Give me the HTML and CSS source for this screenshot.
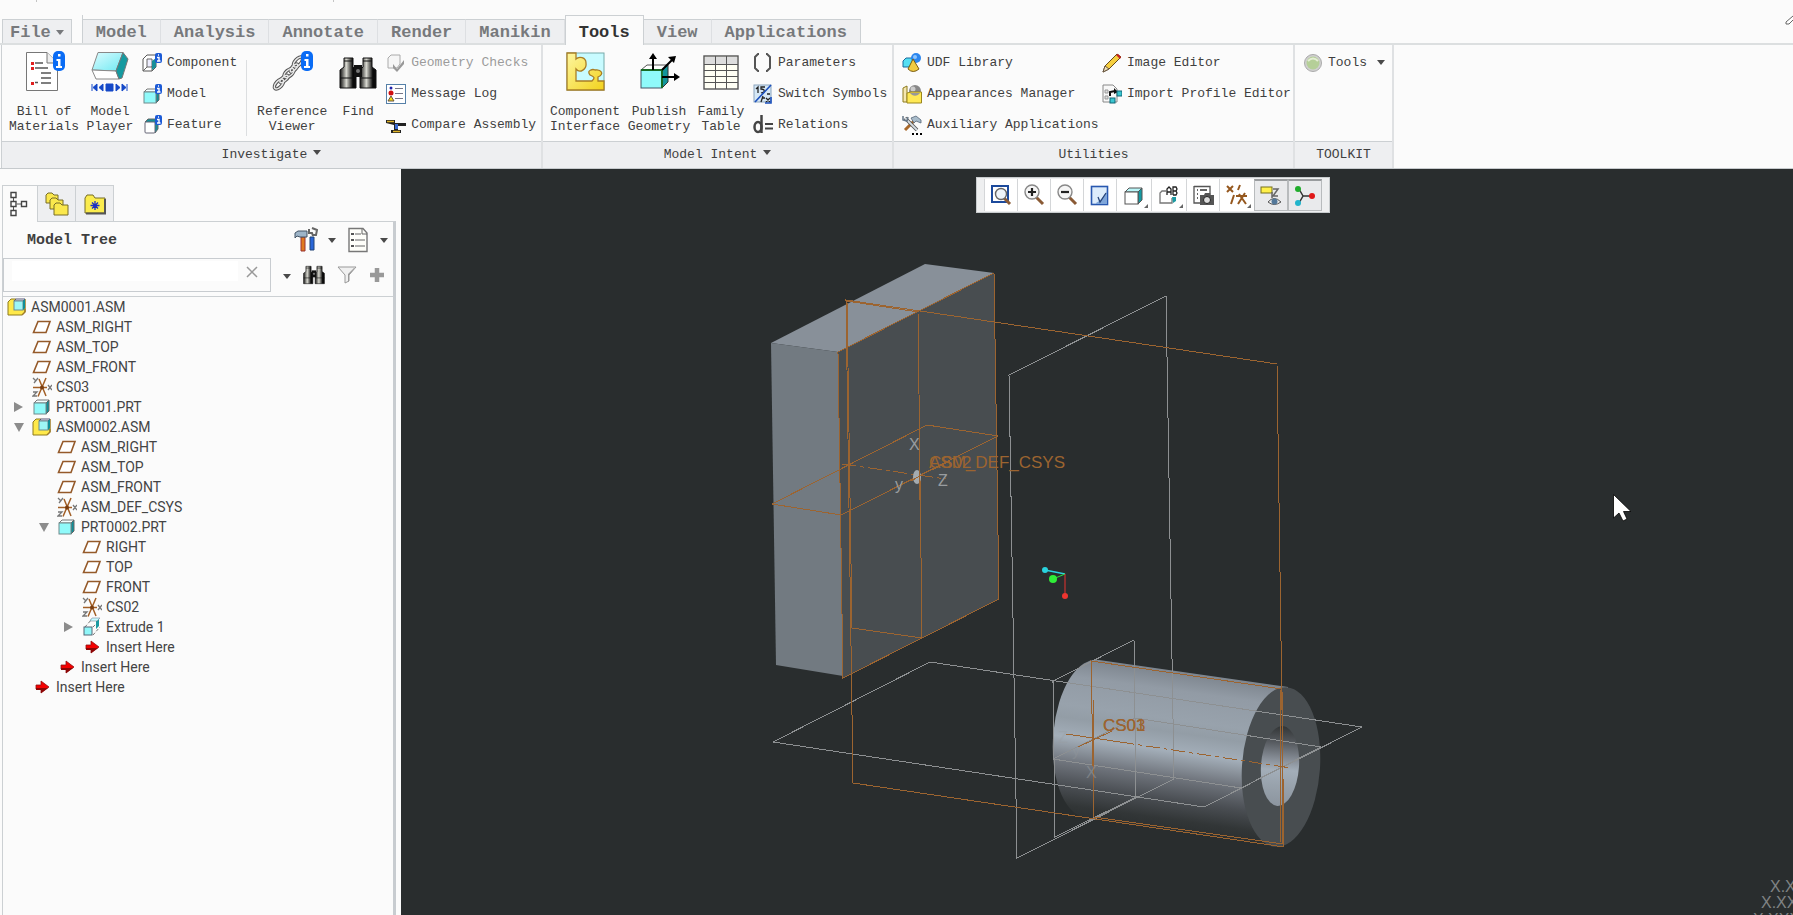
FILE: index.html
```html
<!DOCTYPE html>
<html lang="en">
<head>
    <meta charset="UTF-8">
    <meta name="viewport" content="width=device-width, initial-scale=1.0">
    <title>ASM0001</title>
    <link rel="stylesheet" href="styles.css">
</head>
<body>
    <!-- shared icons -->
    <svg class="sprite" width="0" height="0">
        <linearGradient id="gYellow" x1="0" y1="0" x2="1" y2="1">
            <stop offset="0" stop-color="#fdf6a0"/><stop offset="1" stop-color="#f3d21c"/>
        </linearGradient>
        <linearGradient id="gCyan" x1="0" y1="0" x2="1" y2="1">
            <stop offset="0" stop-color="#dcfcff"/><stop offset="1" stop-color="#6fe9f2"/>
        </linearGradient>
        <linearGradient id="gTube" x1="0" y1="0" x2="1" y2="0">
            <stop offset="0" stop-color="#111"/><stop offset=".4" stop-color="#d8d8d0"/><stop offset=".8" stop-color="#0a0a0a"/>
        </linearGradient>
        <symbol id="plane" viewBox="0 0 20 20">
            <path d="M6 4.500H18L14 15.500H1.500Z" fill="#fff" stroke="#955a2a" stroke-width="1.600"/>
        </symbol>
        <symbol id="csys" viewBox="0 0 20 20">
            <path d="M1 10.500H15M6 19.500L14 1M7 2L14 19" stroke="#a25f26" stroke-width="1.500" fill="none"/>
            <circle cx="10" cy="10.500" r="2" fill="#7a3d10"/>
            <path d="M1 1L4 4M6 1L2 6M16 8L20 13M20 8L16 13M1 15H5L1 19H5" stroke="#777" stroke-width="1.300" fill="none"/>
        </symbol>
        <symbol id="part" viewBox="0 0 20 20">
            <path d="M2 6L5 3H17L14 6Z" fill="#f4ffff" stroke="#777"/>
            <path d="M14 6L17 3V14L14 17Z" fill="#0f8f98" stroke="#666"/>
            <rect x="2" y="6" width="12" height="11" fill="#90fafa" stroke="#6f8a8c"/>
        </symbol>
        <symbol id="asm" viewBox="0 0 20 20">
            <path d="M1 5L4 2H9V12H18V15L15 18H1Z" fill="#ffe94a" stroke="#8d7a1c"/>
            <path d="M15 18L18 15V2" fill="none" stroke="#a07d2a" stroke-width="1.500"/>
            <path d="M7 4L9 2H18L16 4Z" fill="#fff" stroke="#557"/>
            <rect x="7" y="4" width="9" height="9" fill="#9df6f6" stroke="#6a8a90"/>
            <path d="M16 4L18 2V11L16 13Z" fill="#0f8f98"/>
        </symbol>
        <symbol id="insert" viewBox="0 0 20 20">
            <path d="M4 8H9V4L17 10L9 16V12H4Z" fill="#f40000" stroke="#8f1010" stroke-width=".8"/>
            <path d="M4 11H16L9 16V13H4Z" fill="#8a0606"/>
        </symbol>
        <symbol id="extrude" viewBox="0 0 20 20">
            <path d="M3 10L10 2M11 18L18 10M11 10L16 5" stroke="#777" stroke-dasharray="3 2" fill="none"/>
            <path d="M9 2H17V9L14 12V4H8Z" fill="#1a9aa2"/>
            <path d="M8 4L10 1H18L15 4Z" fill="#c9fbff" stroke="#789" stroke-width=".6"/>
            <rect x="2" y="10" width="8" height="8" fill="#8ff6f8" stroke="#567"/>
        </symbol>
        <symbol id="cubeInfo" viewBox="0 0 20 20">
            <rect x="13" y="0" width="7" height="10" rx="2" fill="#1d5bd6"/>
            <path d="M16 2H17M15 4.500H17V8M15 8H18.500" stroke="#fff" stroke-width="1.400" fill="none"/>
        </symbol>
        <symbol id="info" viewBox="0 0 12 20">
            <rect width="12" height="20" rx="5" fill="#0a6cf5"/>
            <path d="M5 3H7.500V5.500H5ZM3.500 8H7.500V15H9V17H3V15H5V10H3.500Z" fill="#fff"/>
        </symbol>
        <symbol id="binoculars" viewBox="0 0 38 32">
            <path d="M5 1H14V10L17 13V31H1V13L5 10Z" fill="url(#gTube)" stroke="#111"/>
            <path d="M24 1H33V10L37 13V31H21V13L24 10Z" fill="url(#gTube)" stroke="#111"/>
            <rect x="15" y="8" width="8" height="12" fill="#111"/>
            <circle cx="19" cy="14" r="2" fill="#777"/>
            <path d="M1 21H17M21 21H37M5 4H14M24 4H33" stroke="#111"/>
        </symbol>
    </svg>

    <div class="quick"><i></i><i></i></div>

    <nav class="tabs">
        <button class="tab file">File<span class="caret"></span></button>
        <div class="tab-set">
            <button class="tab">Model</button>
            <button class="tab">Analysis</button>
            <button class="tab">Annotate</button>
            <button class="tab">Render</button>
            <button class="tab">Manikin</button>
            <button class="tab active">Tools</button>
            <button class="tab">View</button>
            <button class="tab">Applications</button>
        </div>
        <svg class="pen" width="8" height="10" viewBox="0 0 8 10"><path d="M8 1L1 7V9H4L8 5" fill="#fff" stroke="#666"/></svg>
    </nav>

    <div class="ribbon">
        <section class="group investigate">
            <div class="tools">
                <button class="big wide">
                    <svg width="42" height="42" viewBox="0 0 42 42">
                        <path d="M3.500 2.500H24L34.500 13V40.500H3.500Z" fill="#fff" stroke="#777"/>
                        <path d="M24 2.500V13H34.500" fill="#eee" stroke="#777"/>
                        <path d="M12 13H20M12 18H25M18 23H28M18 28H28M18 33H28M12 32.500H15" stroke="#555" stroke-width="1.500"/>
                        <path d="M8 12H11V15H8ZM8 17H11V20H8ZM8 32H11V35H8Z" fill="#e02020"/>
                        <use href="#info" x="30" y="1" width="12" height="20"/>
                    </svg>
                    <span>Bill of<br>Materials</span>
                </button>
                <button class="big slim">
                    <svg width="42" height="42" viewBox="0 0 42 42">
                        <path d="M9 2.500H34L27 21L3 20Z" fill="url(#gCyan)" stroke="#888"/>
                        <path d="M3 20L27 21L30 29H7Z" fill="#fff" stroke="#888"/>
                        <path d="M34 2.500L39 9L33 28L30 29L27 21Z" fill="#159aa0" stroke="#777"/>
                        <path d="M3 34V41M8 34L4 37.500L8 41ZM14 34L10 37.500L14 41ZM17 34H24V41H17ZM27 34L31 37.500L27 41ZM33 34L37 37.500L33 41ZM38 34V41" fill="#1448c8" stroke="#1448c8"/>
                    </svg>
                    <span>Model<br>Player</span>
                </button>
                <div class="list">
                    <button class="small"><svg width="20" height="20" viewBox="0 0 20 20"><path d="M1 6L5 2H14V14L10 18H1Z" fill="#fff" stroke="#555"/><path d="M5 6H10V14H5ZM1 18L5 14M10 18V13" fill="#eef" stroke="#666"/><path d="M10 8L14 5V14L10 17Z" fill="#178e98"/><use href="#cubeInfo" width="20" height="20"/></svg>Component</button>
                    <button class="small"><svg width="20" height="20" viewBox="0 0 20 20"><use href="#part" y="2" width="20" height="20"/><use href="#cubeInfo" width="20" height="20"/></svg>Model</button>
                    <button class="small"><svg width="20" height="20" viewBox="0 0 20 20"><path d="M3 7L6 4H16V14L13 18" fill="#178e98" stroke="#666"/><rect x="3" y="7" width="10" height="11" rx="1" fill="#fff" stroke="#667"/><use href="#cubeInfo" width="20" height="20"/></svg>Feature</button>
                </div>
                <span class="sep"></span>
                <button class="big wide">
                    <svg width="42" height="42" viewBox="0 0 42 42">
                        <g fill="none" stroke="#555" stroke-width="3.500">
                            <ellipse cx="8" cy="34" rx="6" ry="3" transform="rotate(-48 8 34)"/>
                            <ellipse cx="13" cy="29" rx="5" ry="2" transform="rotate(-40 13 29)"/>
                            <ellipse cx="18" cy="23" rx="6" ry="3" transform="rotate(-40 18 23)"/>
                            <ellipse cx="23" cy="18" rx="5" ry="2" transform="rotate(-48 23 18)"/>
                            <ellipse cx="27" cy="12" rx="6" ry="3" transform="rotate(-48 27 12)"/>
                        </g>
                        <g fill="none" stroke="#e9e9e9" stroke-width="1.500">
                            <ellipse cx="8" cy="34" rx="6" ry="3" transform="rotate(-48 8 34)"/>
                            <ellipse cx="13" cy="29" rx="5" ry="2" transform="rotate(-40 13 29)"/>
                            <ellipse cx="18" cy="23" rx="6" ry="3" transform="rotate(-40 18 23)"/>
                            <ellipse cx="23" cy="18" rx="5" ry="2" transform="rotate(-48 23 18)"/>
                            <ellipse cx="27" cy="12" rx="6" ry="3" transform="rotate(-48 27 12)"/>
                        </g>
                        <use href="#info" x="30" y="1" width="12" height="20"/>
                    </svg>
                    <span>Reference<br>Viewer</span>
                </button>
                <button class="big slim">
                    <svg width="42" height="42" viewBox="0 0 42 42"><use href="#binoculars" x="2" y="7" width="38" height="32"/></svg>
                    <span>Find</span>
                </button>
                <div class="list">
                    <button class="small" disabled><svg width="20" height="20" viewBox="0 0 20 20"><path d="M2 5L5 2H14V11L11 15H2Z" fill="#f6f6f6" stroke="#aaa"/><path d="M7 11L11 16L18 7V11L11 19L7 15Z" fill="#999"/></svg>Geometry Checks</button>
                    <button class="small"><svg width="20" height="20" viewBox="0 0 20 20"><rect x=".5" y=".5" width="19" height="19" fill="#fff" stroke="#5580a8"/><path d="M9 4.500H17M9 9.500H17M9 14.500H17" stroke="#778"/><circle cx="5" cy="4" r="1.500" fill="#22a"/><circle cx="5" cy="9" r="2.500" fill="#d01010"/><path d="M5 12L8 17H2Z" fill="#f4d90c" stroke="#654"/></svg>Message Log</button>
                    <button class="small"><svg width="20" height="20" viewBox="0 0 20 20"><path d="M0 5H9V8H20V11H12V15H15V18H5V15H8V10L0 8Z" fill="#222"/><path d="M1 6.500H8M7 16.500H14" stroke="#e0b52a" stroke-width="1.500"/><path d="M9 9H12V14H9Z" fill="#3a6ad0"/></svg>Compare Assembly</button>
                </div>
            </div>
            <button class="caption">Investigate<span class="caret"></span></button>
        </section>

        <section class="group intent">
            <div class="tools">
                <button class="big wide">
                    <svg width="42" height="42" viewBox="0 0 42 42">
                        <rect x="3" y="3" width="37" height="37" fill="#c8fbff" stroke="#7aa"/>
                        <path d="M3 3H12V9C15 6 22 7 22 13C23 19 16 24 12 19V31H28C31 28 31 27 26 25C22 20 29 19 31 20C37 19 41 24 34 27V31H40V40H3Z" fill="url(#gYellow)" stroke="#a97d25" stroke-width="1.300"/>
                    </svg>
                    <span>Component<br>Interface</span>
                </button>
                <button class="big medium">
                    <svg width="42" height="42" viewBox="0 0 42 42">
                        <path d="M3 20L9 15H30L25 20Z" fill="#fff" stroke="#555"/>
                        <path d="M24 20L30 15V32L24 38Z" fill="#12969c" stroke="#333"/>
                        <rect x="3" y="20" width="21" height="18" fill="#8ffafa" stroke="#456"/>
                        <path d="M3 20H24V38" fill="none" stroke="#176b25" stroke-width="2"/>
                        <path d="M15 20V6M24 20L35 9M24 27H38" stroke="#000" stroke-width="2"/>
                        <path d="M15 3L19 9H11ZM38 6L36 13L30 7ZM42 27L36 31V23Z" fill="#000"/>
                    </svg>
                    <span>Publish<br>Geometry</span>
                </button>
                <button class="big slim">
                    <svg width="42" height="42" viewBox="0 0 42 42">
                        <rect x="4" y="6" width="34" height="33" fill="#fffff4" stroke="#555" stroke-width="1.400"/>
                        <rect x="5" y="7" width="32" height="7" fill="#ddd"/>
                        <path d="M4 14.500H38M4 20.500H38M4 26.500H38M4 32.500H38M15.500 6V39M26.500 6V39" stroke="#555"/>
                    </svg>
                    <span>Family<br>Table</span>
                </button>
                <div class="list">
                    <button class="small"><svg width="20" height="20" viewBox="0 0 20 20"><path d="M6 1H5L2 4V15L5 18H6M13 1H14L17 4V15L14 18H13" fill="none" stroke="#555" stroke-width="2"/></svg>Parameters</button>
                    <button class="small"><svg width="20" height="20" viewBox="0 0 20 20"><rect x="1" y="1" width="17" height="17" fill="#d6e8f6" stroke="#8aa4bd"/><path d="M3 5L5 3V9M12 3H8V5Q12 5 11 8L8 9M10 12L8 18M9 14H12M13 14L17 18M17 14L13 18M14 10H17" fill="none" stroke="#222" stroke-width="1.300"/><path d="M2 18L18 1M18 13V19H12" fill="none" stroke="#1c50bd" stroke-width="1.600"/></svg>Switch Symbols</button>
                    <button class="small"><svg width="20" height="20" viewBox="0 0 20 20"><path d="M8.500 0V18" stroke="#444" stroke-width="2.500"/><ellipse cx="5" cy="12" rx="3.500" ry="5" fill="none" stroke="#444" stroke-width="2.500"/><path d="M12 9H20M12 13.500H20" stroke="#444" stroke-width="2"/></svg>Relations</button>
                </div>
            </div>
            <button class="caption">Model Intent<span class="caret"></span></button>
        </section>

        <section class="group utilities">
            <div class="tools">
                <div class="list">
                    <button class="small"><svg width="20" height="20" viewBox="0 0 20 20"><path d="M1 8L4 5H11V12L8 14H1Z" fill="#55dff2" stroke="#1a6a9c"/><circle cx="14" cy="5" r="5" fill="#2c86ee"/><circle cx="13" cy="4" r="2" fill="#8cc6ff"/><path d="M11 6L17 16Q11 21 6 16Z" fill="#f0cb42" stroke="#7a5c12"/></svg>UDF Library</button>
                    <button class="small"><svg width="20" height="20" viewBox="0 0 20 20"><path d="M1 4L5 2V18H1Z" fill="#f5e7b0" stroke="#8d7a1c"/><circle cx="13" cy="7" r="6" fill="#888"/><circle cx="11" cy="5" r="2.500" fill="#ccc"/><path d="M5 9L9 8H19.500V19H5Z" fill="#ffe955" stroke="#9a861f"/><path d="M8 9A6 6 0 0 0 18 9Z" fill="#999"/></svg>Appearances Manager</button>
                    <button class="small"><svg width="20" height="20" viewBox="0 0 20 20"><path d="M3 15L12 6" stroke="#a8682a" stroke-width="3"/><path d="M9 3L14 1L19 5V8L14 6L12 8Z" fill="#a8bccb" stroke="#567" stroke-width=".8"/><path d="M3 3L15 15" stroke="#555" stroke-width="3.500"/><path d="M3 3L15 15" stroke="#d5dde3" stroke-width="1.800"/><path d="M1 1V5L5 6L6 2" fill="none" stroke="#678" stroke-width="1.500"/><path d="M10 18H12V20H10ZM14 18H16V20H14ZM18 18H20V20H18Z" fill="#000"/></svg>Auxiliary Applications</button>
                </div>
                <div class="list">
                    <button class="small"><svg width="20" height="20" viewBox="0 0 20 20"><path d="M1 19L3 13L15 1L19 4L7 16Z" fill="#f6cf3f" stroke="#654a1a"/><path d="M14 2L16 1L19 4L18 6Z" fill="#c42020"/><path d="M1 19L3 13L7 16Z" fill="#eee1bb" stroke="#654"/></svg>Image Editor</button>
                    <button class="small"><svg width="20" height="20" viewBox="0 0 20 20"><path d="M1 1H11L15 5V18H1Z" fill="#f8f8f8" stroke="#888"/><path d="M3 6H6V9H3ZM3 12H6V15H3Z" fill="#ddd" stroke="#999"/><path d="M8 12V8L13 7" fill="none" stroke="#111" stroke-width="2"/><path d="M12 4L16 8L12 10Z" fill="#111"/><rect x="15" y="7" width="5" height="5" fill="#3ac6d0" stroke="#167"/><rect x="8" y="14" width="5" height="5" fill="#3ac6d0" stroke="#167"/></svg>Import Profile Editor</button>
                </div>
            </div>
            <div class="caption">Utilities</div>
        </section>

        <section class="group toolkit">
            <div class="tools">
                <div class="list">
                    <button class="small"><svg width="20" height="20" viewBox="0 0 20 20"><circle cx="10" cy="10" r="8.500" fill="#d0d0d0" stroke="#aaa"/><circle cx="10" cy="10" r="6.500" fill="#b5cf98"/><path d="M5 8Q10 3 15 8" fill="none" stroke="#e4eed4" stroke-width="2"/></svg>Tools<span class="caret"></span></button>
                </div>
            </div>
            <div class="caption">TOOLKIT</div>
        </section>
    </div>

    <main>
        <aside class="side">
            <div class="side-tabs">
                <button class="side-tab active" aria-label="Tree"><svg width="20" height="26" viewBox="0 0 20 26"><path d="M3.500 7V10M3.500 16V19M7 13H12" stroke="#555"/><path d="M1 1.500H6V6.500H1ZM1 10.500H6V15.500H1ZM1 19.500H6V24.500H1ZM11.500 10.500H16.500V15.500H11.500Z" fill="#fff" stroke="#444" stroke-width="1.400"/></svg></button>
                <button class="side-tab" aria-label="Folders"><svg width="24" height="24" viewBox="0 0 24 24"><g fill="#fbe84c" stroke="#766c28"><path d="M1 3L3 1H7L9 3H13V11H1Z"/><path d="M5 8L7 6H11L13 8H18V17H5Z"/><path d="M9 13L11 11H15L17 13H23V23H9Z"/></g></svg></button>
                <button class="side-tab" aria-label="Favorites"><svg width="24" height="24" viewBox="0 0 24 24"><path d="M2 6L4 3H10L12 6H22V21H2Z" fill="#fbec4e" stroke="#766c28"/><path d="M22 7V21.500H3" fill="none" stroke="#555" stroke-width="2"/><path d="M12 9V18M7.500 13.500H16.500M9 10.500L15 16.500M15 10.500L9 16.500" stroke="#1c2fc4" stroke-width="1.300"/></svg></button>
            </div>
            <div class="panel">
                <header class="panel-head">
                    <h2>Model Tree</h2>
                    <button aria-label="Settings"><svg width="24" height="26" viewBox="0 0 24 26"><path d="M7 10H11V24H7Z" fill="#e07a1e" stroke="#933"/><path d="M1 6L4 4H13V10H6L3 9L1 11Z" fill="#9db4c8" stroke="#456"/><path d="M16 10H20V23H16Z" fill="#2a66d8" stroke="#247"/><path d="M15 2V6H18L19 9M18 1L23 3L22 8H18" fill="none" stroke="#666" stroke-width="2"/></svg><span class="caret"></span></button>
                    <button aria-label="Show"><svg width="24" height="26" viewBox="0 0 24 26"><path d="M3 1.500H17L21 6V24.500H3Z" fill="#fffffa" stroke="#777" stroke-width="1.400"/><path d="M16 2V7H21M9 7H15M9 13H19M9 19H19" fill="none" stroke="#666"/><path d="M5 6H8V8H5ZM5 12H8V14H5ZM5 18H8V20H5Z" fill="#555"/></svg><span class="caret"></span></button>
                </header>
                <div class="search">
                    <div class="search-box">
                        <input type="text" aria-label="Search">
                        <button aria-label="Clear"><svg width="12" height="12" viewBox="0 0 12 12"><path d="M1 1L11 11M11 1L1 11" stroke="#999" stroke-width="1.500"/></svg></button>
                    </div>
                    <button aria-label="Options"><span class="caret"></span></button>
                    <button aria-label="Find"><svg width="22" height="20"><use href="#binoculars" width="22" height="20"/></svg></button>
                    <button aria-label="Filter"><svg width="20" height="20" viewBox="0 0 20 20"><path d="M1 2H19L12 10V16L8 18V10Z" fill="#f0f0f0" stroke="#999"/><path d="M11 9L17 3V4L12 10V16L11 17Z" fill="#999"/></svg></button>
                    <button aria-label="Add"><svg width="16" height="16" viewBox="0 0 16 16"><path d="M8 1V15M1 8H15" stroke="#999" stroke-width="4.500"/></svg></button>
                </div>
                <div class="tree">
                    <div class="row root"><svg class="ico"><use href="#asm"/></svg>ASM0001.ASM</div>
                    <ul>
                        <li><div class="row"><i></i><svg class="ico"><use href="#plane"/></svg>ASM_RIGHT</div></li>
                        <li><div class="row"><i></i><svg class="ico"><use href="#plane"/></svg>ASM_TOP</div></li>
                        <li><div class="row"><i></i><svg class="ico"><use href="#plane"/></svg>ASM_FRONT</div></li>
                        <li><div class="row"><i></i><svg class="ico"><use href="#csys"/></svg>CS03</div></li>
                        <li><div class="row"><button class="closed" aria-label="Expand"></button><svg class="ico"><use href="#part"/></svg>PRT0001.PRT</div></li>
                        <li>
                            <div class="row"><button class="open" aria-label="Collapse"></button><svg class="ico"><use href="#asm"/></svg>ASM0002.ASM</div>
                            <ul>
                                <li><div class="row"><i></i><svg class="ico"><use href="#plane"/></svg>ASM_RIGHT</div></li>
                                <li><div class="row"><i></i><svg class="ico"><use href="#plane"/></svg>ASM_TOP</div></li>
                                <li><div class="row"><i></i><svg class="ico"><use href="#plane"/></svg>ASM_FRONT</div></li>
                                <li><div class="row"><i></i><svg class="ico"><use href="#csys"/></svg>ASM_DEF_CSYS</div></li>
                                <li>
                                    <div class="row"><button class="open" aria-label="Collapse"></button><svg class="ico"><use href="#part"/></svg>PRT0002.PRT</div>
                                    <ul>
                                        <li><div class="row"><i></i><svg class="ico"><use href="#plane"/></svg>RIGHT</div></li>
                                        <li><div class="row"><i></i><svg class="ico"><use href="#plane"/></svg>TOP</div></li>
                                        <li><div class="row"><i></i><svg class="ico"><use href="#plane"/></svg>FRONT</div></li>
                                        <li><div class="row"><i></i><svg class="ico"><use href="#csys"/></svg>CS02</div></li>
                                        <li><div class="row"><button class="closed" aria-label="Expand"></button><svg class="ico"><use href="#extrude"/></svg>Extrude 1</div></li>
                                        <li><div class="row"><i></i><svg class="ico"><use href="#insert"/></svg>Insert Here</div></li>
                                    </ul>
                                </li>
                                <li><div class="row"><i></i><svg class="ico"><use href="#insert"/></svg>Insert Here</div></li>
                            </ul>
                        </li>
                        <li><div class="row"><i></i><svg class="ico"><use href="#insert"/></svg>Insert Here</div></li>
                    </ul>
                </div>
            </div>
        </aside>

        <div class="viewport">
            <svg class="scene" viewBox="401 169 1392 746" preserveAspectRatio="xMinYMin meet">
                <defs>
                    <linearGradient id="gCyl" gradientUnits="userSpaceOnUse" x1="1190" y1="673" x2="1168" y2="832">
                        <stop offset="0" stop-color="#7d858e"/>
                        <stop offset=".12" stop-color="#929ba5"/>
                        <stop offset=".3" stop-color="#98a2ac"/>
                        <stop offset=".38" stop-color="#939da6"/>
                        <stop offset=".5" stop-color="#a3aeb9"/>
                        <stop offset=".57" stop-color="#8d959e"/>
                        <stop offset=".66" stop-color="#6f747c"/>
                        <stop offset=".8" stop-color="#4a4e53"/>
                        <stop offset=".92" stop-color="#323637"/>
                        <stop offset="1" stop-color="#2b2f30"/>
                    </linearGradient>
                    <linearGradient id="gHole" x1="0" y1="0" x2="0" y2="1">
                        <stop offset="0" stop-color="#323536"/>
                        <stop offset=".2" stop-color="#55595e"/>
                        <stop offset=".42" stop-color="#888f98"/>
                        <stop offset=".55" stop-color="#a3aeb9"/>
                        <stop offset=".75" stop-color="#98a2ac"/>
                        <stop offset="1" stop-color="#8c959f"/>
                    </linearGradient>
                </defs>

                <!-- block -->
                <path d="M771 343L925 264L994 273L838 352Z" fill="#889099"/>
                <path d="M771 343L838 352L843 676L776 665Z" fill="#727a81"/>
                <path d="M838 352L994 273L999 599L843 678Z" fill="#484d50"/>

                <!-- cylinder -->
                <path d="M1099 660L1288 687L1276 846L1084 817A38 78 4 0 1 1099 660Z" fill="url(#gCyl)"/>
                <ellipse cx="1281" cy="767" rx="39" ry="80" transform="rotate(4 1281 767)" fill="#484d50"/>
                <ellipse cx="1280" cy="766" rx="19" ry="40" transform="rotate(4 1280 766)" fill="url(#gHole)"/>

                <g class="grey-lines">
                    <path d="M1009 375L1166 296L1174 779L1017 858Z"/>
                    <path d="M773 742L930 662L1362 727L1204 807Z"/>
                    <path d="M1053 681L1134 640L1136 797L1055 837Z"/>
                    <path d="M1053 759L1135 718L1321 747L1241 788Z"/>
                </g>

                <g class="orange-lines">
                    <path d="M838 352L994 273L999 599L843 678Z"/>
                    <path d="M846 300L1277 364L1284 847L853 783Z"/>
                    <path d="M847 301L918 312L922 638L852 628Z"/>
                    <path d="M772 504L927 425L998 436L841 515Z"/>
                    <path d="M842 464L946 479" stroke-dasharray="14 4 4 4"/>
                    <path d="M890 490L950 461M919 450V500"/>
                    <path d="M1091 661L1282 689L1283 844L1094 817Z"/>
                    <path d="M1280 690V842M1093 700V770M1078 747L1112 731"/>
                    <path d="M1066 734L1120 742"/>
                    <path d="M1120 742L1291 768" stroke-dasharray="14 4 4 4"/>
                </g>
                <ellipse cx="917" cy="477" rx="4" ry="7" fill="#a4abb0"/>
                <path d="M911 481L925 473M919 468V486" class="orange-lines"/>

                <g class="axis-text">
                    <text x="909" y="450">X</text>
                    <text x="895" y="490">y</text>
                    <text x="938" y="486">Z</text>
                    <text x="1086" y="778" opacity=".5">X</text>
                    <text x="1072" y="756" opacity=".3">y</text>
                    <text x="1058" y="743" opacity=".3">Z</text>
                </g>
                <g class="datum-text">
                    <text x="929" y="468">CS02</text>
                    <text x="929" y="468">ASM_DEF_CSYS</text>
                    <text x="1103" y="731">CS01</text>
                    <text x="1103" y="731">CS03</text>
                </g>

                <!-- spin centre -->
                <path d="M1065 574L1045 570" stroke="#29d3de" stroke-width="1.500"/>
                <circle cx="1045" cy="570" r="3" fill="#29d3de"/>
                <path d="M1065 574L1053 579" stroke="#2ae33a"/>
                <circle cx="1053" cy="579" r="4" fill="#2fee38"/>
                <path d="M1065 574V596" stroke="#e8322e"/>
                <circle cx="1065" cy="596" r="3" fill="#ee3530"/>

                <!-- tolerance readout -->
                <g class="tolerance">
                    <text x="1770" y="892">X.X</text>
                    <text x="1761" y="908">X.XX</text>
                    <text x="1753" y="925">X.XXX</text>
                </g>

                <path d="M1613.500 494.500V518L1619 513L1623 521L1627 519L1623.500 511.500H1631Z" fill="#fff" stroke="#000" stroke-width=".8"/>
            </svg>

            <div class="view-bar">
                <button aria-label="Refit"><svg width="22" height="22" viewBox="0 0 22 22"><rect x="2" y="2" width="16" height="16" fill="#fff" stroke="#1c4a9c" stroke-width="2"/><path d="M14 14L20 20" stroke="#8a5a35" stroke-width="3"/><circle cx="11" cy="10" r="5.500" fill="#eef4fa" stroke="#666" stroke-width="1.400"/></svg></button>
                <button aria-label="Zoom in"><svg width="22" height="22" viewBox="0 0 22 22"><path d="M13 13L20 20" stroke="#8a5a35" stroke-width="3"/><circle cx="9" cy="8" r="7" fill="#f5f5f5" stroke="#888" stroke-width="1.400"/><path d="M9 4V12M5 8H13" stroke="#222" stroke-width="2.200"/></svg></button>
                <button aria-label="Zoom out"><svg width="22" height="22" viewBox="0 0 22 22"><path d="M13 13L20 20" stroke="#8a5a35" stroke-width="3"/><circle cx="9" cy="8" r="7" fill="#f5f5f5" stroke="#888" stroke-width="1.400"/><path d="M5 8H13" stroke="#222" stroke-width="2.200"/></svg></button>
                <button aria-label="Repaint"><svg width="22" height="22" viewBox="0 0 22 22"><rect x="2.500" y="2.500" width="16" height="18" fill="#dcecfb" stroke="#2858b0" stroke-width="1.600"/><path d="M7 19Q13 16 18 7V20H7Z" fill="#7fa6da"/><path d="M9 13L11 18L17 9" fill="none" stroke="#26457a" stroke-width="1.300"/></svg></button>
                <button class="more" aria-label="Display style"><svg width="22" height="22" viewBox="0 0 22 22"><path d="M2 8L6 4H19L15 8Z" fill="#b9f6f8" stroke="#555"/><path d="M15 8L19 4V16L15 20Z" fill="#149aa2" stroke="#555"/><rect x="2" y="8" width="13" height="12" fill="#fff" stroke="#555"/></svg></button>
                <button class="more" aria-label="Saved views"><svg width="22" height="22" viewBox="0 0 22 22"><path d="M8 7H4L2 9V19H14V14" fill="none" stroke="#777" stroke-width="1.300"/><path d="M14 13H18V17L15 19Z" fill="#1a9aa2"/><path d="M9 11V5L11 3L13 5V11M9 8H13M15 11V3H18L19 5L18 7H15M18 7L19 9L18 11H15" fill="none" stroke="#222" stroke-width="1.300"/></svg></button>
                <button aria-label="View manager"><svg width="22" height="22" viewBox="0 0 22 22"><path d="M2 2.500H18V10M2 2V19H8" fill="none" stroke="#555" stroke-width="1.300"/><path d="M5 6H6M5 10H6M5 14H6M8 6H15" stroke="#333" stroke-width="1.500"/><path d="M8 11H12L13 9H18L19 11H22V21H8Z" fill="#555"/><circle cx="15" cy="16" r="3.500" fill="#ddd" stroke="#222"/></svg></button>
                <button class="more" aria-label="Datum display"><svg width="22" height="22" viewBox="0 0 22 22"><path d="M1 2L7 8M7 2L1 8M14 1L12 6M8 11L5 20M10 12H21M12 20L19 9M13 10L20 20" stroke="#95581f" stroke-width="2" fill="none"/></svg></button>
                <button class="on" aria-label="Annotation display"><svg width="22" height="22" viewBox="0 0 22 22"><rect x="1" y="2" width="11" height="6" fill="#fff04a" stroke="#77701c"/><path d="M12 7V13M13 4H18L13 11H18" fill="none" stroke="#666" stroke-width="1.500"/><path d="M8 17Q14 10 21 17Q14 22 8 17Z" fill="#eee" stroke="#555"/><circle cx="14.500" cy="16.500" r="3" fill="#53789a"/></svg></button>
                <button class="on" aria-label="Spin center"><svg width="22" height="22" viewBox="0 0 22 22"><path d="M5 4L9 11L5 18M9 11H18" fill="none" stroke="#333" stroke-width="1.500"/><circle cx="4" cy="4" r="3" fill="#20ad2c"/><circle cx="4" cy="18" r="3" fill="#22b5cc"/><circle cx="18" cy="11" r="3" fill="#e01818"/></svg></button>
            </div>
        </div>
    </main>
</body>
</html>
```
FILE: styles.css
```css
* {
    box-sizing: border-box;
}
body {
    display: flex;
    flex-direction: column;
    height: 100vh;
    margin: 0;
    overflow: hidden;
    background-color: #fbfbfb;
    color: #3f3f3f;
    font-family: "Liberation Mono", monospace;
    font-size: 13px;
}
button {
    padding: 0;
    border: none;
    background: none;
    color: inherit;
    font: inherit;
    cursor: pointer;
}
svg {
    display: block;
    flex: none;
}
.sprite {
    position: absolute;
}
.caret {
    display: inline-block;
    border: 4px solid transparent;
    border-top: 5px solid #4a4a4a;
    border-bottom: none;
}

/* top strip and tabs */
.quick {
    display: flex;
    gap: 296px;
    height: 15px;
    padding-left: 36px;
}
.quick i {
    width: 1px;
    height: 2px;
    background-color: #c4c4c4;
}
.tabs {
    display: flex;
    align-items: flex-end;
    height: 30px;
    padding-left: 2px;
    border-bottom: 2px solid #dcdfe0;
}
.tab-set {
    display: flex;
    align-items: flex-end;
    margin-left: 10px;
    border-left: 1px solid #ccd0d3;
}
.tab {
    height: 24px;
    padding: 2px 13px 0;
    border-top: 1px solid #ccd0d3;
    border-right: 1px solid #dddfe2;
    background-color: #eeeff1;
    color: #77797c;
    font-size: 17px;
    font-weight: bold;
}
.tab:last-child {
    border-right-color: #ccd0d3;
}
.tab.file {
    padding: 2px 7px 0;
    border: 1px solid #ccd0d3;
    border-bottom: none;
}
.tab.file .caret {
    margin-left: 5px;
    border-top-color: #77797c;
    vertical-align: middle;
}
.tab.active {
    height: 30px;
    margin-bottom: -2px;
    padding-top: 4px;
    border: 1px solid #ccd0d3;
    border-bottom: none;
    background-color: #fbfbfb;
    color: #333;
}
.pen {
    margin: 0 0 18px auto;
}

/* ribbon */
.ribbon {
    display: flex;
    height: 124px;
    padding-left: 1px;
    border-bottom: 1px solid #c6cacd;
}
.group {
    display: flex;
    flex-direction: column;
    flex: none;
    border-right: 2px solid #dfe1e3;
}
.investigate {
    width: 542px;
    border-left: 1px solid #ccd0d3;
}
.intent {
    width: 351px;
}
.utilities {
    width: 401px;
}
.toolkit {
    width: 99px;
}
.tools {
    display: flex;
    flex: 1;
    padding: 5px 0 0 3px;
}
.caption {
    height: 27px;
    border-top: 1px solid #ccd0d3;
    background-color: #eeeff1;
    line-height: 26px;
    text-align: center;
}
.caption .caret {
    margin-left: 6px;
    vertical-align: 3px;
}
.big {
    display: flex;
    flex-direction: column;
    align-items: center;
    gap: 12px;
    height: 84px;
    line-height: 15px;
}
.wide {
    width: 78px;
}
.medium {
    width: 70px;
}
.slim {
    width: 54px;
}
.list {
    display: flex;
    flex-direction: column;
    gap: 10px;
    padding: 2px 0 0 5px;
}
.investigate .list:last-child {
    padding-left: 1px;
}
.small {
    display: flex;
    align-items: center;
    gap: 5px;
    height: 21px;
    white-space: nowrap;
}
.small:disabled {
    color: #9b9b9b;
}
.small .caret {
    margin-left: 5px;
}
.sep {
    width: 1px;
    height: 76px;
    margin: 10px 6px 0 9px;
    background-color: #dcdee0;
}
.utilities .list {
    width: 200px;
}

/* model tree */
main {
    display: flex;
    flex: 1;
    min-height: 0;
}
.side {
    display: flex;
    flex-direction: column;
    flex: none;
    width: 401px;
    padding: 16px 5px 0 2px;
}
.side-tabs {
    display: flex;
}
.side-tab {
    display: flex;
    align-items: center;
    justify-content: center;
    width: 38px;
    height: 37px;
    margin-bottom: -1px;
    border: 1px solid #ccd0d3;
    border-left: none;
    background-color: #eeeff1;
}
.side-tab.active {
    z-index: 1;
    width: 36px;
    border-left: 1px solid #ccd0d3;
    border-bottom: none;
    background-color: #fbfbfb;
}
.panel {
    flex: 1;
    border: 1px solid #ccd0d3;
    border-right: 3px solid #c8ccd0;
    border-bottom: none;
}
.panel-head {
    display: flex;
    align-items: center;
    gap: 10px;
    height: 36px;
    padding: 0 5px 0 24px;
}
.panel-head h2 {
    margin: 0 auto 0 0;
    font-size: 15px;
}
.panel-head button {
    display: flex;
    align-items: center;
    gap: 10px;
}
.search {
    display: flex;
    align-items: center;
    gap: 12px;
    height: 39px;
    padding: 0 8px 4px 0;
    border-bottom: 1px solid #ccd0d3;
}
.search-box {
    display: flex;
    align-items: flex-start;
    flex: 1;
    height: 34px;
    padding: 2px 12px 2px 8px;
    border: 1px solid #c8ccd0;
}
.search-box input {
    flex: 1;
    min-width: 0;
    height: 20px;
    border: none;
    background-color: #fff;
    font: inherit;
}
.search-box button {
    margin: 5px 0 0 8px;
}
.tree {
    color: #444;
    font-family: Roboto, sans-serif;
    font-size: 14px;
}
.tree ul {
    margin: 0;
    padding-left: 25px;
    list-style: none;
}
.tree > ul {
    padding-left: 11px;
}
.row {
    display: flex;
    align-items: center;
    height: 20px;
}
.root {
    padding-left: 4px;
}
.row i,
.row button {
    width: 18px;
}
.row button::before {
    content: "";
    display: block;
    width: 0;
    border: 5px solid transparent;
}
.row .closed::before {
    border-left: 9px solid #8c8c8c;
    border-right: none;
}
.row .open::before {
    border-top: 9px solid #8c8c8c;
    border-bottom: none;
}
.ico {
    width: 20px;
    height: 20px;
    margin-right: 4px;
}

/* graphics area */
.viewport {
    position: relative;
    flex: 1;
    overflow: hidden;
    background-color: #292d2e;
}
.scene {
    width: 100%;
    font-family: "Liberation Sans", sans-serif;
}
.grey-lines,
.orange-lines {
    fill: none;
    stroke: #8d9092;
    shape-rendering: crispEdges;
}
.orange-lines {
    stroke: #9c6430;
}
.axis-text,
.tolerance {
    fill: #989c9f;
    font-size: 16px;
}
.tolerance {
    fill: #808384;
}
.datum-text {
    fill: #9c6430;
    font-size: 17px;
}
.view-bar {
    position: absolute;
    top: 8px;
    left: 575px;
    display: flex;
    padding: 1px 7px;
    background-color: #eeeff0;
    border: 1px solid #c8ccce;
}
.view-bar button {
    position: relative;
    display: flex;
    align-items: center;
    justify-content: center;
    width: 33px;
    height: 32px;
    border-left: 1px solid #d4d6d8;
    background-color: #fff;
}
.view-bar .more {
    width: 35px;
}
.view-bar .more::after {
    content: "";
    position: absolute;
    right: 3px;
    bottom: 3px;
    border: 2px solid #666;
    border-top-color: transparent;
    border-left-color: transparent;
}
.view-bar .on {
    width: 34px;
    border: 1px solid #b8bbbd;
    border-top: 2px solid #999c9e;
    background-color: #e9eaec;
}
```
